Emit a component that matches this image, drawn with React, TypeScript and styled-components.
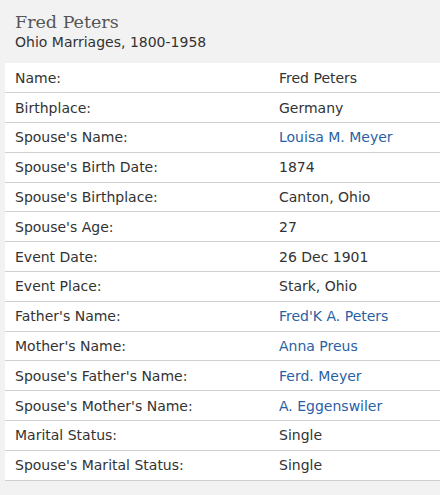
import styled, { createGlobalStyle } from "styled-components";

const GlobalStyle = createGlobalStyle`
  html, body {
    margin: 0;
    padding: 0;
    background: #f2f2f2;
  }
`;

const Page = styled.div`
  width: 440px;
  height: 495px;
  overflow: hidden;
  background: #f2f2f2;
  font-family: Verdana, "DejaVu Sans", sans-serif;
  color: #333;
`;

const Header = styled.div`
  padding: 11px 15px 0 15px;
  height: 53px;
  box-sizing: border-box;
`;

const Title = styled.h1`
  margin: 0;
  font-family: Georgia, "DejaVu Serif", serif;
  font-weight: normal;
  font-size: 17.5px;
  line-height: 22px;
  color: #555;
`;

const Subtitle = styled.div`
  font-size: 14px;
  line-height: 19px;
  color: #333;
`;

const Table = styled.table`
  margin-left: 5px;
  width: 440px;
  border-collapse: collapse;
  background: #fff;
  margin-top: 10px;
`;

const Row = styled.tr`
  height: 29.8px;
  border-bottom: 1px solid #cfcfcf;
`;

const Label = styled.td`
  padding: 0 0 0 10px;
  width: 264px;
  font-size: 14px;
  color: #333;
  vertical-align: middle;
`;

const Value = styled.td<{ $link?: boolean }>`
  padding: 0;
  font-size: 14px;
  color: ${(p) => (p.$link ? "#2a5fa5" : "#333")};
  vertical-align: middle;
`;

const rows: [string, string, boolean?][] = [
  ["Name:", "Fred Peters"],
  ["Birthplace:", "Germany"],
  ["Spouse's Name:", "Louisa M. Meyer", true],
  ["Spouse's Birth Date:", "1874"],
  ["Spouse's Birthplace:", "Canton, Ohio"],
  ["Spouse's Age:", "27"],
  ["Event Date:", "26 Dec 1901"],
  ["Event Place:", "Stark, Ohio"],
  ["Father's Name:", "Fred'K A. Peters", true],
  ["Mother's Name:", "Anna Preus", true],
  ["Spouse's Father's Name:", "Ferd. Meyer", true],
  ["Spouse's Mother's Name:", "A. Eggenswiler", true],
  ["Marital Status:", "Single"],
  ["Spouse's Marital Status:", "Single"],
];

export default function App() {
  return (
    <Page>
      <GlobalStyle />
      <Header>
        <Title>Fred Peters</Title>
        <Subtitle>Ohio Marriages, 1800-1958</Subtitle>
      </Header>
      <Table>
        <tbody>
          {rows.map(([label, value, link]) => (
            <Row key={label}>
              <Label>{label}</Label>
              <Value $link={link}>{value}</Value>
            </Row>
          ))}
        </tbody>
      </Table>
    </Page>
  );
}
